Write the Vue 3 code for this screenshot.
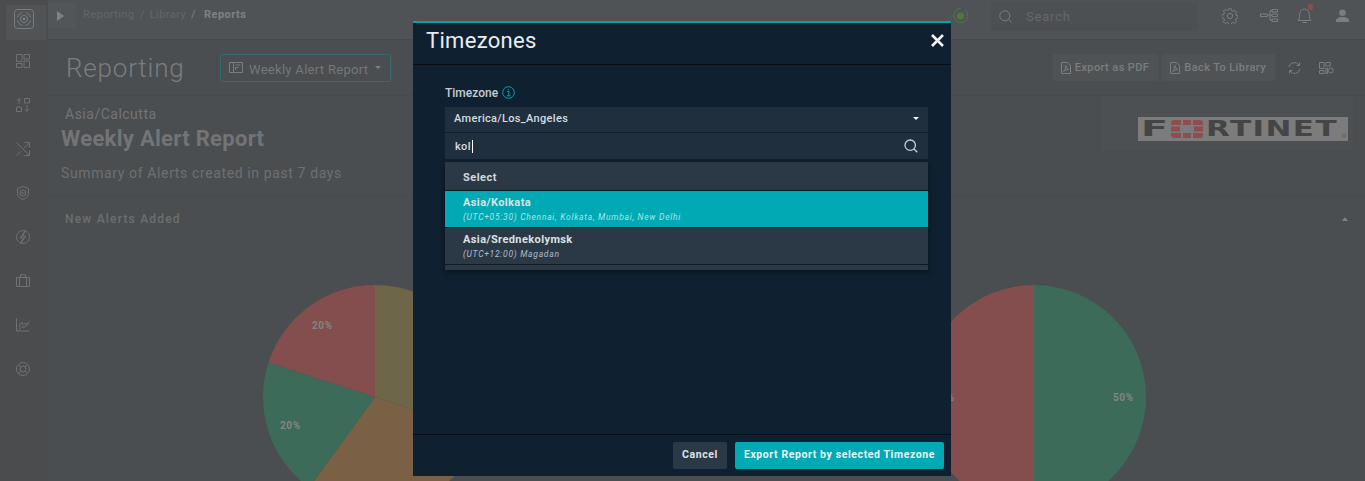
<script setup>
import { ref } from "vue";

const search = ref("kol");

const options = [
  { name: "Asia/Kolkata", info: "(UTC+05:30) Chennai, Kolkata, Mumbai, New Delhi", active: true },
  { name: "Asia/Srednekolymsk", info: "(UTC+12:00) Magadan", active: false },
];
</script>

<template>
  <div class="page">
    <aside class="sidebar">
      <div class="logo-cell">
        <svg width="20" height="20" viewBox="0 0 20 20" fill="none" stroke="#7a7d7f" stroke-width="1">
          <rect x="0.5" y="0.5" width="19" height="19" rx="3" />
          <path d="M3.500 8.500A6.700 6.700 0 0 1 8.500 3.500M11.500 3.500a6.700 6.700 0 0 1 5 5M16.500 11.500a6.700 6.700 0 0 1-5 5M8.500 16.500a6.700 6.700 0 0 1-5-5" />
          <circle cx="10" cy="10" r="3.600" />
          <circle cx="10" cy="10" r="1.400" fill="#7a7d7f" stroke="none" />
        </svg>
      </div>
      <nav class="side-nav">
        <svg width="14" height="14" viewBox="0 0 14 14"><path d="M.5.500h5.500v7H.5zM8 .5h5.500v4.500H8zM.5 9.500h5.500v4H.5zM8 7h5.500v6.500H8z" /></svg>
        <svg width="14" height="14" viewBox="0 0 14 14"><path d="M3 6V.8M1 2.600 3 .6l2 2M11 7v6.200M9 11.400l2 2 2-2M8.500.5h5v4.500h-5zM.5 9h5v4.500h-5z" /></svg>
        <svg width="14" height="14" viewBox="0 0 14 14"><path d="M.3.500 13 13M13.500 8.500V13.500H8.500M13.500 1l-6 5.500M4.500 9.500.5 13.500M8.500.5h5v5" /></svg>
        <svg width="14" height="14" viewBox="0 0 14 14"><path d="M7 .5 12.500 2.500v5C12.500 10.500 10 12.500 7 13.500 4 12.500 1.500 10.500 1.500 7.500v-5z" /><circle cx="7" cy="7" r="3" /><path d="M4.500 7h5" /></svg>
        <svg width="14" height="14" viewBox="0 0 14 14"><path d="M11.500 2.400A6.500 6.500 0 0 0 1.800 11M2.500 11.600A6.500 6.500 0 0 0 12.200 3" /><path d="M9.500.5 4 7.800h3.500L4.500 13.500l5.500-7.300H6.500z" /></svg>
        <svg width="14" height="14" viewBox="0 0 14 14"><path d="M.5 3.500h13v9H.5zM4.500 3.500V.8h5v2.700M3.500 3.500v9M10.500 3.500v9" /></svg>
        <svg width="14" height="14" viewBox="0 0 14 14"><path d="M.5.500v12.500h13M3 9l2.500-5 2 3 2-2 1 1.500 3-3M3 11.500l3-3 2 1 4.500-3.500" /></svg>
        <svg width="14" height="14" viewBox="0 0 14 14"><circle cx="7" cy="7" r="6.500" /><circle cx="7" cy="7" r="3" /><path d="M2.500 2.500l2.400 2.400M11.500 2.500 9.100 4.900M2.500 11.500l2.400-2.400M11.500 11.500 9.100 9.100" /></svg>
      </nav>
    </aside>

    <div class="main">
      <header class="topbar">
        <div class="toggle"><span class="play"></span></div>
        <div class="crumbs">
          <span>Reporting</span><i>/</i><span>Library</span><i class="strong">/</i><b>Reports</b>
        </div>
        <div class="status">
          <svg width="17" height="17" viewBox="0 0 18 18" fill="none">
            <path d="M14.500 3.500A7.500 7.500 0 1 1 9 1.500" stroke="#4c7a3c" />
            <circle cx="9" cy="9.500" r="3.800" fill="#4c7a3c" />
          </svg>
        </div>
        <div class="search-box">
          <svg class="line-ico" width="13" height="13" viewBox="0 0 13 13"><circle cx="5.800" cy="5.800" r="5" /><path d="m9.500 9.500 3 3" /></svg>
          <span>Search</span>
        </div>
        <div class="top-icons">
          <svg class="line-ico" width="16" height="16" viewBox="0 0 16 16"><circle cx="8" cy="8" r="2.600" /><path d="M6.800.7h2.400l.4 2 1.500.7 1.800-1.100 1.700 1.700-1.100 1.800.6 1.500 2 .4v2.400l-2 .4-.6 1.500 1.100 1.800-1.700 1.700-1.800-1.100-1.500.6-.4 2H6.800l-.4-2-1.500-.6-1.800 1.100-1.700-1.700 1.100-1.800-.6-1.500-2-.4V6.800l2-.4.6-1.500-1.100-1.800 1.700-1.700 1.800 1.100 1.500-.7z" /></svg>
          <svg class="line-ico" width="18" height="13" viewBox="0 0 18 13"><path d="M.5 5h7v2.500h-7zM12 .5h5.500V3H12zM12 5h5.500v2.500H12zM12 10h5.500v2.500H12zM7.500 6.200H12M10 1.700v9.500M10 1.700h2M10 11.200h2" /></svg>
          <span class="bell">
            <svg class="line-ico" width="15" height="17" viewBox="0 0 15 17"><path d="M1 13.500c1.500-1.500 1.600-3 1.600-6 0-3 2-5.500 4.900-5.500s4.900 2.500 4.900 5.500c0 3 .1 4.500 1.600 6zM5.500 15.500h4" /></svg>
            <em></em>
          </span>
          <svg width="13" height="13" viewBox="0 0 13 13" fill="#7b7d7f"><circle cx="6.500" cy="3.800" r="3.300" /><path d="M0 13v-2c0-1.500 2.500-2.500 4.500-3h4c2 .5 4.500 1.500 4.500 3v2z" /></svg>
        </div>
      </header>

      <section class="title-row">
        <h1>Reporting</h1>
        <div class="report-select">
          <svg class="line-ico" width="14" height="11" viewBox="0 0 14 11"><path d="M.5.500h13v10H.5zM4.500.500v10M6.500 3h5M6.500 5.500h3M6.500 5.500v2.500" /></svg>
          <span class="select-text">Weekly Alert Report</span>
          <span class="caret"></span>
        </div>
        <div class="actions">
          <button class="act-btn">
            <svg class="line-ico" width="10" height="12" viewBox="0 0 10 12"><path d="M.5.500h6l3 3v8H.5zM2.500 9.500c1.500-1 2.500-3.500 2.300-6 .5 2.500 1.500 3.500 3 4-1.500 0-3.500.5-5.300 2z" /></svg>
            Export as PDF
          </button>
          <button class="act-btn">
            <svg class="line-ico" width="10" height="12" viewBox="0 0 10 12"><path d="M.5.500h6l3 3v8H.5zM2.500 9.500c1.500-1 2.500-3.500 2.300-6 .5 2.500 1.500 3.500 3 4-1.500 0-3.500.5-5.300 2z" /></svg>
            Back To Library
          </button>
          <svg class="line-ico refresh" width="13" height="12" viewBox="0 0 13 12"><path d="M1 5a5.500 5.500 0 0 1 10-2M12 7a5.500 5.500 0 0 1-10 2M11.500.5v3h-3M1.500 11.500v-3h3" /></svg>
          <svg class="line-ico" width="15" height="12" viewBox="0 0 15 12"><path d="M.5.500h4.500v6H.5zM6.800.5h4.500v3.500H6.800zM.5 8.500h4.500v3H.5zM6.800 6.500h1.700v5H6.800z" /><circle cx="11.800" cy="8.500" r="2.400" /></svg>
        </div>
      </section>

      <section class="report-head">
        <div class="head-text">
          <div class="zone">Asia/Calcutta</div>
          <h2>Weekly Alert Report</h2>
          <p>Summary of Alerts created in past 7 days</p>
        </div>
        <div class="brand-pane">
          <div class="brand">
            <span class="brand-f">F</span>
            <svg width="32" height="18" viewBox="0 0 32 18" fill="#8f4d4f">
              <path d="M0 5V3a3 3 0 0 1 3-3h7v5zM12 0h8v5h-8zM22 0h7a3 3 0 0 1 3 3v2H22zM0 6.500h9v5H0zM23 6.500h9v5h-9zM0 13h10v5H3a3 3 0 0 1-3-3zM12 13h8v5h-8zM22 13h10v2a3 3 0 0 1-3 3h-7z" />
            </svg>
            <span class="brand-rest">RTINET</span>
            <small>®</small>
          </div>
        </div>
      </section>

      <section class="alerts">
        <div class="alerts-head">
          <span>New Alerts Added</span>
          <span class="caret up"></span>
        </div>
        <div class="charts">
          <div class="chart">
            <svg width="226" height="226" viewBox="-113 -113 226 226">
              <path d="M0 0V-112A112 112 0 0 1 106.500 34.600Z" fill="#6d6648" />
              <path d="M0 0 106.500 34.600A112 112 0 0 1 -65.800 90.600Z" fill="#7a6045" />
              <path d="M0 0-65.800 90.600A112 112 0 0 1-106.500-34.600Z" fill="#3d6b59" />
              <path d="M0 0-106.500-34.600A112 112 0 0 1 0-112Z" fill="#834e4d" />
              <text x="-63" y="-68">20%</text>
              <text x="-95" y="32">20%</text>
            </svg>
          </div>
          <div class="chart">
            <svg width="226" height="226" viewBox="-113 -113 226 226">
              <path d="M0-112A112 112 0 0 1 0 112Z" fill="#3d6b59" />
              <path d="M0 112A112 112 0 0 1 0-112Z" fill="#834e4d" />
              <text x="79" y="4">50%</text>
              <text x="-100" y="4">50%</text>
            </svg>
          </div>
        </div>
      </section>
    </div>

    <div class="modal">
      <div class="modal-head">
        <span>Timezones</span>
        <svg width="13" height="13" viewBox="0 0 13 13" fill="none" stroke="#f2f4f5" stroke-width="2.600"><path d="m1 1 11 11M12 1 1 12" /></svg>
      </div>
      <div class="modal-body">
        <label class="field-label">
          Timezone
          <svg width="13" height="13" viewBox="0 0 13 13" fill="none" stroke="#00a3ad"><circle cx="6.500" cy="6.500" r="5.800" /><path d="M5 5.500h1.800v4M5 9.800h3.500M6.300 3v1.200" /></svg>
        </label>
        <div class="tz-select">
          <span>America/Los_Angeles</span>
          <span class="caret white"></span>
        </div>
        <div class="tz-search">
          <span class="typed">{{ search }}<i class="cursor"></i></span>
          <svg width="14" height="14" viewBox="0 0 14 14" fill="none" stroke="#c9d0d5" stroke-width="1.300"><circle cx="6.200" cy="6.200" r="5.200" /><path d="m10 10 3.300 3.300" /></svg>
        </div>
        <div class="dropdown">
          <div class="opt-head">Select</div>
          <div v-for="opt in options" :key="opt.name" class="opt" :class="{ active: opt.active }">
            <div class="opt-name">{{ opt.name }}</div>
            <div class="opt-info">{{ opt.info }}</div>
          </div>
        </div>
      </div>
      <div class="modal-foot">
        <button class="btn cancel">Cancel</button>
        <button class="btn primary">Export Report by selected Timezone</button>
      </div>
    </div>
  </div>
</template>

<style>
html,
body {
  margin: 0;
  overflow: hidden;
}
</style>

<style scoped>
.page {
  position: relative;
  display: flex;
  height: 481px;
  overflow: hidden;
  background: #4a4e51;
  font-family: Roboto, "Liberation Sans", sans-serif;
  color: #787a7b;
}

svg {
  display: block;
  flex: none;
}

/* sidebar */
.sidebar {
  width: 48px;
  flex: none;
  background: #4b4c4e;
}

.logo-cell {
  height: 35px;
  margin: 5px 2px 0 6px;
  padding: 4px 0 0 8px;
  box-sizing: border-box;
  background: #515457;
}

.side-nav {
  display: flex;
  flex-direction: column;
  align-items: center;
  gap: 30px;
  padding: 14px 0 0 0;
  margin-left: -3px;
}

.side-nav path,
.side-nav circle {
  fill: none;
  stroke: #6f7173;
  stroke-width: 1;
}

.line-ico {
  fill: none;
  stroke: #7b7d7f;
  stroke-width: 1;
}

/* top bar */
.main {
  flex: 1;
  min-width: 0;
}

.topbar {
  height: 40px;
  display: flex;
  align-items: flex-start;
  background: #505356;
  border-bottom: 1px solid #474a4c;
  box-sizing: border-box;
}

.toggle {
  width: 28px;
  height: 25px;
  margin-top: 3px;
  background: #535659;
  display: flex;
  align-items: center;
  justify-content: center;
}

.play {
  border-left: 7px solid #7f8183;
  border-top: 5.500px solid transparent;
  border-bottom: 5.500px solid transparent;
  margin-left: -4px;
}

.crumbs {
  margin: 8px 0 0 7px;
  font-size: 11px;
  line-height: 13px;
  letter-spacing: 0.45px;
  color: #636668;
  display: flex;
  gap: 5px;
  width: 869px;
}

.crumbs i {
  font-style: normal;
}

.crumbs .strong,
.crumbs b {
  color: #7f8183;
}

.crumbs b {
  margin-left: 3px;
}

.status {
  margin: 7px 0 0 0;
  width: 39px;
}

.search-box {
  width: 206px;
  height: 29px;
  margin-top: 2px;
  background: #4d5053;
  border-radius: 3px;
  display: flex;
  align-items: center;
  gap: 14px;
  padding-left: 8px;
  box-sizing: border-box;
  font-size: 13px;
  letter-spacing: 0.8px;
  color: #65686a;
}

.top-icons {
  display: flex;
  align-items: center;
  margin: 7px 0 0 25px;
  gap: 22px;
}

.top-icons .bell {
  margin-left: -3px;
}

.top-icons .bell + svg {
  margin-left: 2px;
}

.bell {
  position: relative;
  display: block;
}

.bell em {
  position: absolute;
  top: -3px;
  right: -1px;
  width: 5px;
  height: 6px;
  border-radius: 2px;
  background: #8c4f50;
}

/* title row */
.title-row {
  height: 56px;
  display: flex;
  align-items: center;
  padding: 0 31px 0 18px;
  border-bottom: 1px solid #47494b;
  box-sizing: border-box;
}

h1 {
  margin: 0;
  font-size: 26px;
  font-weight: 300;
  letter-spacing: 0.8px;
  color: #7b7d7e;
  width: 154px;
}

.report-select {
  width: 171px;
  height: 28px;
  box-sizing: border-box;
  border: 1px solid #336c6e;
  border-radius: 2px;
  display: flex;
  align-items: center;
  gap: 6px;
  padding-left: 8px;
  font-size: 13px;
  letter-spacing: 0.3px;
  color: #75777a;
}

.select-text {
  padding-top: 3px;
}

.caret {
  width: 0;
  height: 0;
  border-left: 3.500px solid transparent;
  border-right: 3.500px solid transparent;
  border-top: 3.500px solid #7d7f81;
  margin-left: 1px;
}

.caret.white {
  border-top-color: #fff;
}

.caret.up {
  border-top: 0;
  border-bottom: 4px solid #7d7f81;
}

.actions {
  margin-left: auto;
  display: flex;
  align-items: center;
  gap: 4px;
}

.act-btn {
  height: 27px;
  border: 0;
  border-radius: 2px;
  background: #505356;
  color: #7b7d7f;
  font: 500 11px Roboto, sans-serif;
  letter-spacing: 0.4px;
  display: flex;
  align-items: center;
  gap: 4px;
  padding: 0 9px 0 8px;
}

.refresh {
  margin: 0 14px 0 9px;
}

/* report header */
.report-head {
  height: 101px;
  display: flex;
  justify-content: space-between;
  border-bottom: 1px solid #47494b;
  box-sizing: border-box;
}

.head-text {
  padding: 10px 0 0 13px;
}

.zone {
  margin-left: 4px;
  font-size: 14px;
  line-height: 16px;
  letter-spacing: 0.5px;
  color: #727476;
}

h2 {
  margin: 4px 0 0;
  font-size: 22px;
  line-height: 26px;
  font-weight: 700;
  letter-spacing: 0.3px;
  color: #737476;
}

.head-text p {
  margin: 12px 0 0;
  font-size: 14px;
  line-height: 18px;
  letter-spacing: 0.62px;
  color: #6e7072;
}

.brand-pane {
  width: 251px;
  height: 54px;
  margin-right: 12px;
  background: #4c5052;
  padding: 21px 0 0 36px;
  box-sizing: border-box;
}

.brand {
  position: relative;
  width: 210px;
  height: 24px;
  background: #7c7c7c;
  color: #454545;
  display: flex;
  align-items: center;
  padding-left: 3px;
  box-sizing: border-box;
  font: 700 22px/24px "DejaVu Sans", sans-serif;
}

.brand-f {
  display: block;
  width: 30px;
  transform: scaleX(1.8);
  transform-origin: left center;
}

.brand-rest {
  display: block;
  margin-left: 3px;
  transform: scaleX(1.41);
  transform-origin: left center;
  letter-spacing: 1px;
  white-space: nowrap;
}

.brand small {
  position: absolute;
  right: 1px;
  bottom: 2px;
  font-size: 6px;
  line-height: 7px;
  font-weight: 400;
  color: #5a5a5a;
}

/* chart section */
.alerts-head {
  height: 44px;
  display: flex;
  align-items: center;
  justify-content: space-between;
  padding: 0 17px 0 17px;
  font-size: 12px;
  font-weight: 500;
  letter-spacing: 1.2px;
  color: #6c6e70;
}

.charts {
  display: grid;
  grid-template-columns: 1fr 1fr;
  padding: 43px 0 0 0;
  margin-left: -2px;
  width: 1317px;
}

.chart {
  display: flex;
  justify-content: center;
}

.chart text {
  font: 700 10px Roboto, sans-serif;
  letter-spacing: 0.6px;
  fill: #848484;
}

/* modal */
.modal {
  position: absolute;
  left: 413px;
  top: 21px;
  width: 538px;
  height: 455px;
  background: #0f2030;
  border-top: 2px solid #00a3b0;
  box-sizing: border-box;
  display: flex;
  flex-direction: column;
  color: #d5dadd;
}

.modal-head {
  height: 42px;
  flex: none;
  box-sizing: border-box;
  border-bottom: 1px solid #050e16;
  display: flex;
  align-items: center;
  justify-content: space-between;
  padding: 0 7px 6px 13px;
  font-size: 22px;
  letter-spacing: 0.3px;
  color: #e9ecee;
}

.modal-head svg {
  margin-top: -1px;
}

.modal-body {
  flex: 1;
  padding: 20px 23px 0 32px;
  min-height: 0;
}

.field-label {
  display: flex;
  align-items: center;
  gap: 4px;
  height: 15px;
  font-size: 12px;
  font-weight: 500;
  letter-spacing: 0;
  color: #c6ccd0;
}

.tz-select,
.tz-search {
  background: #1f2f3e;
  display: flex;
  align-items: center;
  justify-content: space-between;
  font-size: 11px;
  font-weight: 500;
  letter-spacing: 0.33px;
  box-sizing: border-box;
  color: #d7dcdf;
}

.tz-select {
  height: 25px;
  margin-top: 7px;
  padding: 0 9px 2px 9px;
}

.tz-search {
  height: 26px;
  margin-top: 1px;
  padding: 0 3px 0 10px;
}

.tz-search svg {
  margin-right: 7px;
}

.cursor {
  display: inline-block;
  width: 1px;
  height: 13px;
  margin-left: 1px;
  background: #fff;
  vertical-align: -3px;
}

.dropdown {
  margin-top: 3px;
  background: #2b3947;
  padding-bottom: 5px;
  box-shadow: 0 2px 6px rgba(0, 0, 0, 0.4);
}

.opt-head {
  height: 28px;
  display: flex;
  align-items: center;
  padding: 2px 0 0 18px;
  box-sizing: border-box;
  font-size: 11px;
  font-weight: 700;
  letter-spacing: 0.5px;
  color: #d5dadd;
}

.opt {
  height: 37px;
  border-top: 1px solid #0f1821;
  box-sizing: border-box;
  padding: 5px 0 0 18px;
}

.opt:last-child {
  height: 38px;
  border-bottom: 1px solid #0f1821;
}

.opt.active {
  background: #00a9b3;
}

.opt-name {
  font-size: 11px;
  line-height: 14px;
  font-weight: 700;
  letter-spacing: 0.4px;
  color: #dce1e4;
}

.opt-info {
  margin-top: 2px;
  font-size: 8.500px;
  line-height: 11px;
  font-style: italic;
  letter-spacing: 0.72px;
  color: #b2bcc5;
}

.opt.active .opt-info {
  color: #a9e6ea;
}

.modal-foot {
  height: 42px;
  flex: none;
  box-sizing: border-box;
  border-top: 1px solid #050e16;
  display: flex;
  justify-content: flex-end;
  align-items: flex-start;
  gap: 8px;
  padding: 7px 7px 0 0;
}

.btn {
  height: 27px;
  border: 0;
  border-radius: 2px;
  font: 700 10.500px Roboto, sans-serif;
  letter-spacing: 0.6px;
  color: #dfe3e6;
  padding: 0 0 2px;
}

.btn.cancel {
  width: 54px;
  background: #2b3947;
}

.btn.primary {
  width: 209px;
  background: #00a9b3;
  color: #e8f6f7;
}
</style>
